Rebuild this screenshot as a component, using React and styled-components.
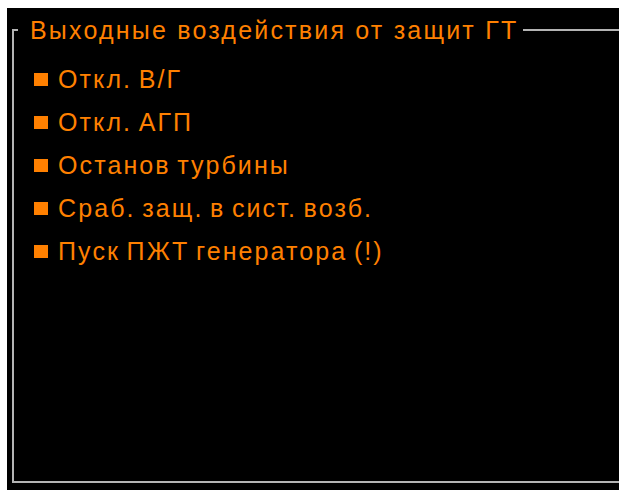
import React from "react";
import styled, { createGlobalStyle } from "styled-components";

const GlobalStyle = createGlobalStyle`
  html, body {
    margin: 0;
    padding: 0;
    background: #fff;
    overflow: hidden;
  }
`;

const Screen = styled.div`
  margin: 8px 0 0 7px;
  width: 640px;
  height: 482px;
  background: #000;
  display: flex;
  flex-direction: column;
  box-sizing: border-box;
  padding: 8px 0 7px 5px;
`;

const Group = styled.fieldset`
  flex: 1;
  margin: 0;
  padding: 0 0 0 4px;
  border: 2px solid #b4b4b4;
  min-width: 0;
`;

const Caption = styled.legend`
  padding: 0 5px 0 12px;
  font-family: "Liberation Sans", Arial, sans-serif;
  font-size: 25px;
  letter-spacing: 2.2px;
  line-height: 28px;
  color: #ff8000;
`;

const List = styled.ul`
  list-style: none;
  margin: 0;
  padding: 14px 0 0 16px;
`;

const Item = styled.li`
  display: flex;
  align-items: center;
  gap: 10px;
  height: 43px;
  font-family: "Liberation Sans", Arial, sans-serif;
  font-size: 25px;
  letter-spacing: 2.1px;
  word-spacing: -2.5px;
  color: ${(props) => props.color || "#ff8000"};
`;

const Marker = styled.span`
  width: 14px;
  height: 13px;
  flex: none;
  background: ${(props) => props.color || "#ff8000"};
`;

// выходные воздействия
const outputs = [
  "Откл. В/Г",
  "Откл. АГП",
  "Останов турбины",
  "Сраб. защ. в сист. возб.",
  "Пуск ПЖТ генератора (!)",
];

const App = () => {
  return (
    <>
      <GlobalStyle />
      <Screen>
        <Group>
          <Caption>Выходные воздействия от защит ГТ</Caption>
          <List>
            {outputs.map((text) => (
              <Item key={text}>
                <Marker />
                {text}
              </Item>
            ))}
          </List>
        </Group>
      </Screen>
    </>
  );
};

export default App;
